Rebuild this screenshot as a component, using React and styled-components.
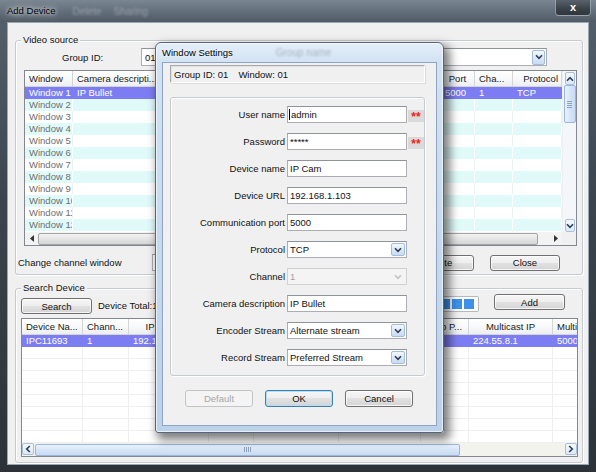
import { Fragment } from "react";
import styled, { createGlobalStyle, css } from "styled-components";

const GlobalStyle = createGlobalStyle`
  * { box-sizing: border-box; }
  html, body { margin: 0; padding: 0; }
  body {
    width: 596px;
    height: 472px;
    overflow: hidden;
    background: #2b3138;
    font-family: "Liberation Sans", Arial, sans-serif;
    font-size: 9.5px;
    color: #111;
  }
`;

const Window = styled.div`
  position: relative;
  width: 596px;
  height: 472px;
  display: flex;
  flex-direction: column;
  background: linear-gradient(180deg, #6a7683 0px, #525e6a 22px, #3b444d 200px, #2c3238 100%);
`;

const TitleBar = styled.div`
  height: 22px;
  flex-shrink: 0;
  display: flex;
  align-items: center;
  padding-left: 7px;
  background: linear-gradient(180deg, #7a8692 0%, #616d79 55%, #505b66 100%);
`;

const TitleText = styled.span`
  color: #000;
  line-height: 12px;
  text-shadow: 0 0 4px #fff, 0 0 8px rgba(255, 255, 255, 0.8);
`;

const GhostText = styled.span`
  margin-left: ${(p) => p.$gap}px;
  color: ${(p) => p.$color || "rgba(225, 232, 240, 0.4)"};
  filter: blur(1.2px);
  font-size: 10px;
  white-space: nowrap;
`;

const CloseButton = styled.div`
  align-self: flex-start;
  margin-left: auto;
  margin-right: 5px;
  width: 36px;
  height: 16px;
  border: 1px solid rgba(210, 220, 230, 0.55);
  border-top: none;
  border-radius: 0 0 4px 4px;
  background: linear-gradient(180deg, #59626c 0%, #3a4148 60%, #30363c 100%);
  color: #fff;
  font-weight: bold;
  font-size: 11px;
  line-height: 14px;
  text-align: center;
`;

const Client = styled.div`
  flex: 1;
  margin: 0 7px 7px 7px;
  background: #f0f0f0;
  border: 1px solid #9aa6b2;
  display: flex;
  flex-direction: column;
`;

const GroupBox = styled.div`
  position: relative;
  flex-shrink: 0;
  margin: ${(p) => p.$top}px 0 0 7px;
  width: 568px;
  height: ${(p) => p.$h}px;
  border: 1px solid #c5cbd1;
  border-radius: 3px;
  box-shadow: inset 1px 1px 0 #fff, 1px 1px 0 #fff;
  display: flex;
  flex-direction: column;
`;

const GroupLabel = styled.span`
  position: absolute;
  top: -7px;
  left: 5px;
  padding: 0 2px;
  background: #f0f0f0;
  line-height: 12px;
`;

const GroupIdRow = styled.div`
  display: flex;
  align-items: center;
  height: 18px;
  margin-top: 7px;
  padding-left: 46px;
`;

const FieldLabel = styled.span`
  width: ${(p) => (p.$w ? `${p.$w}px` : "auto")};
  flex-shrink: 0;
  white-space: nowrap;
`;

const Combo = styled.div`
  width: ${(p) => p.$w}px;
  height: ${(p) => p.$h || 18}px;
  margin-left: ${(p) => p.$ml || 0}px;
  flex-shrink: 0;
  display: flex;
  align-items: center;
  padding-left: 3px;
  background: #fff;
  border: 1px solid #abadb3;
  border-top-color: #8f949b;
`;

const DropButton = styled.div`
  margin-left: auto;
  margin-right: 1px;
  width: ${(p) => p.$w || 14}px;
  height: ${(p) => p.$h || 13}px;
  display: flex;
  align-items: center;
  justify-content: center;
  ${(p) =>
    p.$disabled
      ? css`
          border: 1px solid transparent;
        `
      : css`
          border: 1px solid #a2bcdc;
          border-radius: 2px;
          background: linear-gradient(180deg, #f3f8fe 0%, #dde9f7 50%, #c8dbf2 100%);
        `}
`;

const ChevronSvg = styled.svg`
  transform: rotate(${(p) => p.$rot}deg);
  display: block;
`;

const Chevron = ({ dir = "down", color = "#2d3d55" }) => {
  const rot = { down: 0, up: 180, left: 90, right: -90 }[dir];
  return (
    <ChevronSvg $rot={rot} width="8" height="6" viewBox="0 0 8 6">
      <path d="M1 1.2 L4 4.3 L7 1.2" fill="none" stroke={color} strokeWidth="1.6" />
    </ChevronSvg>
  );
};

const Triangle = ({ dir = "left" }) => (
  <svg width="4" height="7" viewBox="0 0 4 7">
    {dir === "left" ? (
      <polygon points="4,0 4,7 0,3.5" fill="#333" />
    ) : (
      <polygon points="0,0 0,7 4,3.5" fill="#333" />
    )}
  </svg>
);

/* tables */

const TableFrame = styled.div`
  flex-shrink: 0;
  margin: ${(p) => p.$margin};
  width: ${(p) => p.$w}px;
  height: ${(p) => p.$h}px;
  border: 1px solid #828790;
  background: #fff;
  display: grid;
  grid-template-columns: ${(p) => (p.$vscroll ? "1fr 14px" : "1fr")};
  grid-template-rows: 1fr 13px;
  overflow: hidden;
`;

const Viewport = styled.div`
  overflow: hidden;
  min-width: 0;
  min-height: 0;
`;

const HeaderRow = styled.div`
  display: flex;
  height: 16px;
  background: linear-gradient(180deg, #ffffff 0%, #f8f9fa 50%, #eceef1 100%);
  border-bottom: 1px solid #d5d5d5;
`;

const HeaderCell = styled.div`
  flex: 0 0 ${(p) => p.$w}px;
  padding: 0 ${(p) => (p.$align === "right" ? 3 : 4)}px;
  border-right: 1px solid #d5d5d5;
  line-height: 15px;
  text-align: ${(p) => p.$align || "left"};
  white-space: nowrap;
  overflow: hidden;
  color: #1a1a1a;
`;

const BodyRow = styled.div`
  display: flex;
  height: 12px;
  background: ${(p) => (p.$selected ? "#7d7df3" : p.$cyan ? "#e0fafa" : "#fff")};
  color: ${(p) => (p.$selected ? "#fff" : p.$muted ? "#6e6e6e" : "#111")};
  border-bottom: ${(p) => (p.$lined ? "1px solid #efefef" : "none")};
`;

const Cell = styled.div`
  flex: 0 0 ${(p) => p.$w}px;
  padding: 0 4px;
  line-height: 12px;
  white-space: nowrap;
  overflow: hidden;
  border-right: 1px solid ${(p) => p.$grid};
`;

const HScroll = styled.div`
  grid-column: 1;
  grid-row: 2;
  display: flex;
  height: 13px;
  background: ${(p) => p.$track};
`;

const ScrollArrow = styled.div`
  flex: 0 0 ${(p) => p.$size || 13}px;
  height: ${(p) => p.$size || 13}px;
  margin-top: ${(p) => p.$mt || 0}px;
  display: flex;
  align-items: center;
  justify-content: center;
  ${(p) =>
    p.$boxed &&
    css`
      border: 1px solid #a9bfdb;
      border-radius: 2px;
      background: linear-gradient(180deg, #f5f9fe 0%, #dce8f6 100%);
    `}
`;

const Track = styled.div`
  flex: 1;
  display: flex;
  align-items: center;
`;

const Thumb = styled.div`
  margin-left: ${(p) => p.$start}px;
  width: ${(p) => p.$len}px;
  height: 12px;
  flex-shrink: 0;
  border-radius: 2px;
  display: flex;
  align-items: center;
  justify-content: center;
  ${(p) =>
    p.$blue
      ? css`
          border: 1px solid #9ab6da;
          background: linear-gradient(180deg, #eaf2fc 0%, #d6e5f7 50%, #c7dbf3 100%);
        `
      : css`
          border: 1px solid #a3a3a3;
          background: linear-gradient(180deg, #f4f4f4 0%, #e4e4e4 50%, #d6d6d6 100%);
        `}
`;

const Grip = styled.span`
  width: 7px;
  height: 5px;
  background: repeating-linear-gradient(90deg, #90a3bb 0 1px, transparent 1px 2px);
`;

const VScroll = styled.div`
  grid-column: 2;
  grid-row: 1;
  display: flex;
  flex-direction: column;
  align-items: center;
  background: #f4f7fa;
  border-left: 1px solid #eef1f4;
`;

const VThumb = styled.div`
  width: 12px;
  height: ${(p) => p.$len}px;
  border: 1px solid #9ab6da;
  border-radius: 2px;
  background: linear-gradient(90deg, #eaf2fc 0%, #d6e5f7 50%, #c7dbf3 100%);
  display: flex;
  align-items: center;
  justify-content: center;
`;

const VGrip = styled.span`
  width: 5px;
  height: 7px;
  background: repeating-linear-gradient(180deg, #90a3bb 0 1px, transparent 1px 2px);
`;

const Spacer = styled.div`
  flex: 1;
`;

const Corner = styled.div`
  grid-column: 2;
  grid-row: 2;
  background: #f0f0f0;
`;

/* buttons and rows */

const Button = styled.button`
  flex-shrink: 0;
  width: ${(p) => p.$w}px;
  height: ${(p) => p.$h || 16}px;
  margin-right: ${(p) => p.$mr || 0}px;
  padding: 0;
  font: inherit;
  color: ${(p) => (p.disabled ? "#a6a6a6" : "#111")};
  border: 1px solid ${(p) => (p.disabled ? "#c2c5c7" : p.$default ? "#3c7fb1" : "#707070")};
  border-radius: 3px;
  background: ${(p) =>
    p.disabled
      ? "#f4f4f4"
      : "linear-gradient(180deg, #f6f6f6 0%, #eeeeee 49%, #e2e2e2 50%, #d4d4d4 100%)"};
  box-shadow: inset 0 0 0 1px
    ${(p) => (p.disabled ? "transparent" : p.$default ? "#b4def6" : "rgba(255,255,255,0.75)")};
  align-self: ${(p) => p.$align || "center"};
`;

const ChannelRow = styled.div`
  display: flex;
  align-items: center;
  height: 17px;
  margin-top: 8px;
  padding-left: 2px;
`;

const ButtonGroup = styled.div`
  display: flex;
  gap: 16px;
  margin-left: auto;
  margin-right: 22px;
`;

const ActionRow = styled.div`
  display: flex;
  height: 20px;
  margin-top: 5px;
  padding-left: 5px;
`;

const DeviceTotal = styled.span`
  align-self: flex-end;
  margin-left: 6px;
  line-height: 16px;
`;

const Progress = styled.div`
  align-self: center;
  margin-left: auto;
  margin-right: 15px;
  width: 150px;
  height: 16px;
  padding: 2px;
  border: 1px solid #b9b9b9;
  border-radius: 2px;
  background: #fff;
`;

const ProgressFill = styled.div`
  height: 100%;
  background: repeating-linear-gradient(90deg, #3c92ea 0 10px, transparent 10px 12px);
`;

/* dialog */

const DialogFrame = styled.div`
  position: absolute;
  left: 155px;
  top: 42px;
  width: 289px;
  height: 391px;
  display: flex;
  flex-direction: column;
  padding: 0 6px 6px;
  border: 1px solid #55657a;
  border-radius: 6px 6px 3px 3px;
  background: linear-gradient(180deg, #e4eef9 0px, #d1e2f3 20px, #c4d8ee 60%, #bcd1ea 100%);
  box-shadow: inset 0 0 0 1px rgba(255, 255, 255, 0.65), 4px 5px 10px 2px rgba(0, 0, 0, 0.5);
`;

const DialogTitle = styled.div`
  height: 19px;
  flex-shrink: 0;
  display: flex;
  align-items: center;
`;

const DialogClient = styled.div`
  flex: 1;
  display: flex;
  flex-direction: column;
  background: #f0f0f0;
  border: 1px solid #8da5c2;
`;

const InfoPanel = styled.div`
  margin: 2px 0 0 7px;
  width: 255px;
  height: 18px;
  flex-shrink: 0;
  display: flex;
  align-items: center;
  padding-left: 3px;
  border-top: 1px solid #a9a9a9;
  border-left: 1px solid #a9a9a9;
  border-right: 1px solid #fff;
  border-bottom: 1px solid #fff;
  box-shadow: inset 1px 1px 0 #e2e2e2, 1px 1px 0 #dcdcdc;
`;

const InfoItem = styled.span`
  margin-left: ${(p) => p.$gap || 0}px;
  white-space: nowrap;
`;

const FormBox = styled.div`
  margin: 14px 0 0 7px;
  width: 255px;
  height: 279px;
  flex-shrink: 0;
  border: 1px solid #c5cbd1;
  border-radius: 3px;
  box-shadow: inset 1px 1px 0 #fff, 1px 1px 0 #fff;
`;

const FormGrid = styled.div`
  display: grid;
  grid-template-columns: 116px 120px 17px;
  grid-auto-rows: 17px;
  row-gap: 10px;
  padding-top: 8px;
`;

const FormLabel = styled.span`
  text-align: right;
  padding-right: 2px;
  line-height: 17px;
  white-space: nowrap;
`;

const TextBox = styled.div`
  height: 17px;
  display: flex;
  align-items: center;
  padding-left: ${(p) => (p.$caret ? 1 : 2)}px;
  background: ${(p) => (p.$disabled ? "#f4f4f4" : "#fff")};
  color: ${(p) => (p.$disabled ? "#a0a0a0" : "#111")};
  border: 1px solid ${(p) => (p.$disabled ? "#d2d2d2" : "#abadb3")};
  border-top-color: ${(p) => (p.$disabled ? "#cfcfcf" : "#8f949b")};
  white-space: nowrap;
`;

const Caret = styled.span`
  width: 1px;
  height: 11px;
  margin-right: 1px;
  background: #000;
`;

const Required = styled.span`
  align-self: end;
  margin: 0 0 1px 1px;
  height: 12px;
  background: #dadada;
  color: #f21a1a;
  font-size: 12px;
  font-weight: bold;
  line-height: 15px;
  text-align: center;
  overflow: hidden;
`;

const DialogButtons = styled.div`
  display: flex;
  gap: 12px;
  margin: 14px 0 0 22px;
`;

/* data */

const videoColumns = [
  { t: "Window", w: 48 },
  { t: "Camera descripti...", w: 100 },
  { t: "Device name", w: 78 },
  { t: "Device URL", w: 90 },
  { t: "User name", w: 50 },
  { t: "Password", w: 50 },
  { t: "Port", w: 34, a: "center" },
  { t: "Cha...", w: 38 },
  { t: "Protocol", w: 49, a: "right" },
];

const videoRows = [
  ["Window 1", "IP Bullet", "IP Cam", "192.168.1.103", "admin", "*****", "5000", "1", "TCP"],
  ...Array.from({ length: 14 }, (_, i) => [`Window ${i + 2}`]),
];

const deviceColumns = [
  { t: "Device Na...", w: 61 },
  { t: "Chann...", w: 46 },
  { t: "IP Address", w: 80, a: "center" },
  { t: "Port", w: 45, a: "center" },
  { t: "Subnet mask", w: 85, a: "center" },
  { t: "Gateway", w: 82, a: "center" },
  { t: "Web P...", w: 48, a: "center" },
  { t: "Multicast IP", w: 84, a: "center" },
  { t: "Multicast port", w: 70 },
];

const deviceRows = [
  ["IPC11693", "1", "192.168.1.103", "5000", "255.255.255.0", "192.168.1.1", "80", "224.55.8.1", "5000"],
  ...Array.from({ length: 8 }, () => []),
];

const VideoTable = () => (
  <TableFrame $margin="4px 0 0 8px" $w={553} $h={176} $vscroll>
    <Viewport>
      <HeaderRow>
        {videoColumns.map((c) => (
          <HeaderCell key={c.t} $w={c.w} $align={c.a}>
            {c.t}
          </HeaderCell>
        ))}
      </HeaderRow>
      {videoRows.map((row, i) => {
        const cyan = i % 2 === 1;
        return (
          <BodyRow key={i} $selected={i === 0} $cyan={cyan} $muted>
            {videoColumns.map((c, j) => (
              <Cell key={j} $w={c.w} $grid={i === 0 ? "#7d7df3" : cyan ? "#ffffff" : "#e9f3f3"}>
                {row[j] || ""}
              </Cell>
            ))}
          </BodyRow>
        );
      })}
    </Viewport>
    <VScroll>
      <ScrollArrow $boxed $size={13} $mt={1}>
        <Chevron dir="up" />
      </ScrollArrow>
      <VThumb $len={38}>
        <VGrip />
      </VThumb>
      <Spacer />
      <ScrollArrow $boxed $size={13}>
        <Chevron dir="down" />
      </ScrollArrow>
    </VScroll>
    <HScroll $track="#f3f3f3">
      <ScrollArrow>
        <Triangle dir="left" />
      </ScrollArrow>
      <Track>
        <Thumb $start={0} $len={500} />
      </Track>
      <ScrollArrow>
        <Triangle dir="right" />
      </ScrollArrow>
    </HScroll>
    <Corner />
  </TableFrame>
);

const DeviceTable = () => (
  <TableFrame $margin="4px 0 0 5px" $w={557} $h={139}>
    <Viewport>
      <HeaderRow>
        {deviceColumns.map((c) => (
          <HeaderCell key={c.t} $w={c.w} $align={c.a}>
            {c.t}
          </HeaderCell>
        ))}
      </HeaderRow>
      {deviceRows.map((row, i) => (
        <BodyRow key={i} $selected={i === 0} $lined={i > 0}>
          {deviceColumns.map((c, j) => (
            <Cell key={j} $w={c.w} $grid={i === 0 ? "#7d7df3" : "#efefef"}>
              {row[j] || ""}
            </Cell>
          ))}
        </BodyRow>
      ))}
    </Viewport>
    <HScroll $track="#f3f3ee">
      <ScrollArrow $boxed $size={12}>
        <Chevron dir="left" />
      </ScrollArrow>
      <Track>
        <Thumb $blue $start={1} $len={425}>
          <Grip />
        </Thumb>
      </Track>
      <ScrollArrow $boxed $size={12}>
        <Chevron dir="right" />
      </ScrollArrow>
    </HScroll>
  </TableFrame>
);

const formFields = [
  { label: "User name", value: "admin", caret: true, required: true },
  { label: "Password", value: "*****", required: true },
  { label: "Device name", value: "IP Cam" },
  { label: "Device URL", value: "192.168.1.103" },
  { label: "Communication port", value: "5000" },
  { label: "Protocol", value: "TCP", select: true },
  { label: "Channel", value: "1", select: true, disabled: true },
  { label: "Camera description", value: "IP Bullet" },
  { label: "Encoder Stream", value: "Alternate stream", select: true },
  { label: "Record Stream", value: "Preferred Stream", select: true },
];

const WindowSettings = () => (
  <DialogFrame>
    <DialogTitle>
      <TitleText>Window Settings</TitleText>
      <GhostText $gap={43} $color="rgba(70, 80, 95, 0.35)">
        Group name
      </GhostText>
    </DialogTitle>
    <DialogClient>
      <InfoPanel>
        <InfoItem>Group ID: 01</InfoItem>
        <InfoItem $gap={10}>Window: 01</InfoItem>
      </InfoPanel>
      <FormBox>
        <FormGrid>
          {formFields.map((f) => (
            <Fragment key={f.label}>
              <FormLabel>{f.label}</FormLabel>
              <TextBox $caret={f.caret} $disabled={f.disabled}>
                {f.caret && <Caret />}
                {f.value}
                {f.select && (
                  <DropButton $disabled={f.disabled}>
                    <Chevron color={f.disabled ? "#c4c4c4" : "#2d3d55"} />
                  </DropButton>
                )}
              </TextBox>
              {f.required ? <Required>**</Required> : <span />}
            </Fragment>
          ))}
        </FormGrid>
      </FormBox>
      <DialogButtons>
        <Button $w={68} $h={17} disabled>
          Default
        </Button>
        <Button $w={68} $h={17} $default>
          OK
        </Button>
        <Button $w={68} $h={17}>
          Cancel
        </Button>
      </DialogButtons>
    </DialogClient>
  </DialogFrame>
);

const App = () => {
  return (
    <Window>
      <GlobalStyle />
      <TitleBar>
        <TitleText>Add Device</TitleText>
        <GhostText $gap={17}>Delete</GhostText>
        <GhostText $gap={12}>Sharing</GhostText>
        <CloseButton>x</CloseButton>
      </TitleBar>
      <Client>
        <GroupBox $top={17} $h={235}>
          <GroupLabel>Video source</GroupLabel>
          <GroupIdRow>
            <FieldLabel $w={79}>Group ID:</FieldLabel>
            <Combo $w={406}>
              01
              <DropButton $w={13} $h={15}>
                <Chevron />
              </DropButton>
            </Combo>
          </GroupIdRow>
          <VideoTable />
          <ChannelRow>
            <FieldLabel>Change channel window</FieldLabel>
            <Combo $w={140} $h={17} $ml={30} />
            <ButtonGroup>
              <Button $w={71}>Delete</Button>
              <Button $w={70}>Close</Button>
            </ButtonGroup>
          </ChannelRow>
        </GroupBox>
        <GroupBox $top={13} $h={175}>
          <GroupLabel>Search Device</GroupLabel>
          <ActionRow>
            <Button $w={71} $align="flex-end">
              Search
            </Button>
            <DeviceTotal>Device Total:1</DeviceTotal>
            <Progress>
              <ProgressFill />
            </Progress>
            <Button $w={71} $align="flex-start" $mr={17}>
              Add
            </Button>
          </ActionRow>
          <DeviceTable />
        </GroupBox>
      </Client>
      <WindowSettings />
    </Window>
  );
};

export default App;
